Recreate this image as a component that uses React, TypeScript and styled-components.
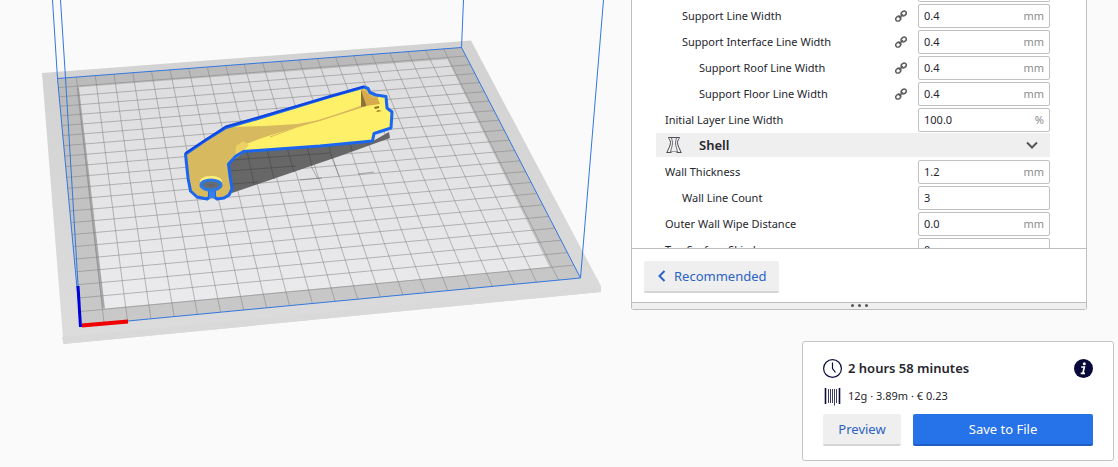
import React from "react";
import styled, { createGlobalStyle } from "styled-components";

const GlobalStyle = createGlobalStyle`
  *, *::before, *::after { box-sizing: border-box; }
  body {
    margin: 0;
    background: #fafafa;
    color: #26262e;
    font-family: "Noto Sans", sans-serif;
    font-size: 11px;
  }
  button, input { font: inherit; color: inherit; }
`;

const Page = styled.div`
  display: flex;
  min-height: 100vh;
  overflow: hidden;
`;

const Viewport = styled.main`
  flex: 1;
  min-width: 0;
`;

const Scene = styled.svg`
  display: block;
  width: 100%;
`;

const Sidebar = styled.aside`
  display: flex;
  flex-direction: column;
  align-items: flex-end;
  justify-content: space-between;
  flex: none;
  padding: 0 4px 6px 0;
`;

const Panel = styled.section`
  width: 456px;
  margin: 0 27px 0 0;
  background: #fff;
  border: 1px solid #bebebe;
  border-top: 0;
  border-radius: 0 0 3px 3px;
`;

const SettingList = styled.div`
  height: 248px;
  overflow: hidden;
  padding: 0 36px 0 24px;
`;

const FieldEdge = styled.div`
  width: 132px;
  height: 2px;
  margin-left: auto;
  border: 1px solid #c0c0c0;
  border-top: 0;
  border-radius: 0 0 2px 2px;
`;

const SettingRow = styled.label<{ $depth: number }>`
  display: flex;
  align-items: center;
  height: 26px;
  padding: 2px 0 0 ${(p) => 9 + p.$depth * 17}px;
  line-height: 24px;
`;

const SettingName = styled.span`
  flex: 1;
  white-space: nowrap;
`;

const LinkIcon = styled.svg`
  width: 12px;
  height: 12px;
  margin-right: 11px;
`;

const Field = styled.span`
  display: flex;
  align-items: center;
  width: 132px;
  height: 24px;
  padding: 0 5px;
  border: 1px solid #c0c0c0;
  border-radius: 2px;
  background: #fff;
`;

const FieldInput = styled.input`
  flex: 1;
  min-width: 0;
  height: 22px;
  padding: 0;
  border: 0;
  outline: 0;
  background: transparent;
`;

const Unit = styled.span`
  color: #8c8c8c;
`;

const CategorySlot = styled.div`
  display: flex;
  align-items: center;
  height: 26px;
`;

const Category = styled.button`
  display: flex;
  align-items: center;
  width: 100%;
  height: 24px;
  padding: 0 12px 0 10px;
  border: 0;
  background: #efefef;
  font-size: 13px;
  font-weight: 600;
  text-align: left;
`;

const CategoryIcon = styled.svg`
  width: 16px;
  height: 16px;
  margin-right: 17px;
`;

const Chevron = styled.svg`
  width: 12px;
  height: 8px;
  margin-left: auto;
`;

const PanelFooter = styled.div`
  padding: 12px 12px 9px;
  border-top: 1px solid #bebebe;
`;

const Button = styled.button<{ $primary?: boolean }>`
  display: flex;
  align-items: center;
  justify-content: center;
  height: 32px;
  padding: 0 12px;
  border: 0;
  border-bottom: 2px solid ${(p) => (p.$primary ? "#1f5cc4" : "#d5d5d5")};
  border-radius: 2px;
  background: ${(p) => (p.$primary ? "#2672e8" : "#efefef")};
  color: ${(p) => (p.$primary ? "#fff" : "#2b63c6")};
  font-size: 13px;
  white-space: nowrap;
`;

const BackIcon = styled.svg`
  width: 8px;
  height: 12px;
  margin: 0 8px 0 2px;
`;

const ResizeHandle = styled.div`
  display: flex;
  justify-content: center;
  gap: 4px;
  height: 7px;
  padding-top: 1px;
  border-top: 1px solid #bebebe;
  background: #efefef;
`;

const Dot = styled.span`
  width: 3px;
  height: 3px;
  border-radius: 50%;
  background: #555;
`;

const PrintCard = styled.section`
  width: 312px;
  padding: 15px 20px 14px;
  background: #fff;
  border: 1px solid #c4c4c4;
  border-radius: 3px;
`;

const InfoRow = styled.div`
  display: flex;
  align-items: center;
  gap: 6px;
  height: 22px;
  margin-bottom: 6px;
`;

const Duration = styled.strong`
  flex: 1;
  font-size: 13px;
  font-weight: 600;
`;

const InfoButton = styled.button`
  display: flex;
  padding: 0;
  border: 0;
  background: none;
`;

const Material = styled.span`
  line-height: 20px;
`;

const Actions = styled.div`
  display: grid;
  grid-template-columns: 78px 1fr;
  gap: 12px;
  padding-top: 1px;
`;

type Point = [number, number];

/* Floor corners of the build volume on screen. */
const BACK_LEFT: Point = [57.5, 78.5];
const BACK_RIGHT: Point = [461.5, 47.5];
const FRONT_RIGHT: Point = [580.5, 278];
const FRONT_LEFT: Point = [80.5, 325.5];
const CELLS = 22;

/* Perspective mapping of the unit square onto the floor. */
function project(u: number, v: number): Point {
  const [x0, y0] = BACK_LEFT;
  const [x1, y1] = BACK_RIGHT;
  const [x2, y2] = FRONT_RIGHT;
  const [x3, y3] = FRONT_LEFT;
  const dx1 = x1 - x2;
  const dx2 = x3 - x2;
  const dx3 = x0 - x1 + x2 - x3;
  const dy1 = y1 - y2;
  const dy2 = y3 - y2;
  const dy3 = y0 - y1 + y2 - y3;
  const det = dx1 * dy2 - dx2 * dy1;
  const g = (dx3 * dy2 - dx2 * dy3) / det;
  const h = (dx1 * dy3 - dx3 * dy1) / det;
  const w = g * u + h * v + 1;
  return [
    ((x1 - x0 + g * x1) * u + (x3 - x0 + h * x3) * v + x0) / w,
    ((y1 - y0 + g * y1) * u + (y3 - y0 + h * y3) * v + y0) / w,
  ];
}

const segment = (a: Point, b: Point) =>
  `M${a[0].toFixed(2)} ${a[1].toFixed(2)}L${b[0].toFixed(2)} ${b[1].toFixed(2)}`;

const gridPath = Array.from({ length: CELLS - 1 }, (_, i) => {
  const t = (i + 1) / CELLS;
  return segment(project(t, 0), project(t, 1)) + segment(project(0, t), project(1, t));
}).join("");

const MODEL =
  "M185.500 154L206 140L226 127.500L256 119L330 96.500L364 87L368 88.500L370 92.500L376 95L386 96.500L387 108L392 112L391 128L374 133.500L372.500 141L320 146L243.500 151.500L236 156L228.500 164L230 176L232 189L229 195L224 198L217 199L214.500 197V188H209.500V197L207 199L197 197L190.500 191L188 178Z";

function BuildPlate() {
  return (
    <Scene viewBox="0 0 631 467" role="img" aria-label="Build plate with model">
      <defs>
        <linearGradient id="bed" x1="0" y1="0" x2="0" y2="1">
          <stop offset="0" stopColor="#dcdcde" />
          <stop offset="1" stopColor="#ebebed" />
        </linearGradient>
        <linearGradient id="rim" x1="0" y1="0" x2="0" y2="1">
          <stop offset="0" stopColor="#d2d2d2" />
          <stop offset="1" stopColor="#dcdcdc" />
        </linearGradient>
        <linearGradient id="margin" x1="0" y1="0" x2="0" y2="1">
          <stop offset="0" stopColor="#b9b9b9" />
          <stop offset="1" stopColor="#c9c9c9" />
        </linearGradient>
        <clipPath id="body">
          <path d={MODEL} />
        </clipPath>
      </defs>
      <path d="M42 73L471 40.500L601 286V292L63.500 344Z" fill="url(#rim)" />
      <path d="M62 337L601 286V292L63.500 344Z" fill="#d9d9d9" />
      <path d="M57.500 78.500L461.500 47.500L580.500 278L80.500 325.500Z" fill="url(#margin)" />
      <path d="M76.500 88L79 87.500L105 308L102 308Z" fill="#a9a9a9" />
      <path d="M79 87.300L447.500 59.300L549.500 267L105 308.500Z" fill="url(#bed)" />
      <path d={gridPath} stroke="#858585" strokeOpacity=".55" fill="none" />
      <path d="M228 164L244 152L373 141L389 132L390 138L340 156L232 193Z" fill="#626262" fillOpacity=".96" />
      <path d="M247 151L254 185M267 150L274 179M287 148L294 172M307 147L312 166M329 145L332 159M350 143L352 151M229 171L296 166M232 184L258 182M232 160L330 153" stroke="#4c4c4c" strokeOpacity=".7" fill="none" />
      <path d="M311 166L318 179M332 158L339 176M300 180L322 178M358 174L374 172" stroke="#666" strokeOpacity=".5" fill="none" />

      <g fill="none" stroke="#3377dd">
        <path d="M52.500 0L57.500 78.500L80.500 325.500M60.500 0L65.500 78L80.500 325.500" />
        <path d="M57.500 78.500L461.500 47.500L580.500 278L80.500 325.500" />
        <path d="M463.500 0L461.500 47.500M603.500 0L580.500 278" />
      </g>
      <path d="M78 286L80.500 327" stroke="#00d" strokeWidth="3" />
      <path d="M82 325.500L128 321.500" stroke="#f00000" strokeWidth="4" />

      <g clipPath="url(#body)">
        <path d={MODEL} fill="#d7b95f" />
        <path d="M227 127L365 86L363 105L320 120L297 124L265 126Z" fill="#fff069" />
        <path d="M236 159L241 146L262 138L297 127L320 121L363 107L378 100V94L395 96V130L373 144L243 154Z" fill="#fff069" />
        <path d="M236 146L243 141L249 145L241 154L235 157Z" fill="#ebd064" />
        <path d="M361 90L363 89L370 97L378 99L380 104L373 105L366 106L361 107Z" fill="#d7aa4b" />
        <path d="M361 90L366.500 106L361 107Z" fill="#89733a" />
        <path d="M374 107L379 106V108L375 109ZM378 110L382 111L376 112Z" fill="#8a6e2b" />
        <path d="M270 137L297 127L362 107" stroke="#d7b95f" fill="none" />
      </g>
      <ellipse cx="211" cy="181" rx="11" ry="5" fill="#ffee79" />
      <path d={MODEL} fill="none" stroke="#1b66ef" strokeWidth="3" strokeLinejoin="round" />
      <path d="M185.500 153L226 126.500L256 118L364 86.500" stroke="#1044df" strokeWidth="2" fill="none" />
      <path d="M212 188V198" stroke="#3780e5" strokeWidth="6" />
      <ellipse cx="211" cy="185" rx="10" ry="5" fill="#646d7b" stroke="#2d79e5" strokeWidth="3" />
      <path d="M207 184H215L211 188Z" fill="#666" />
    </Scene>
  );
}

interface Setting {
  name: string;
  value: string;
  unit?: string;
  depth?: number;
  linked?: boolean;
}

const lineWidths: Setting[] = [
  { name: "Support Line Width", value: "0.4", unit: "mm", depth: 1, linked: true },
  { name: "Support Interface Line Width", value: "0.4", unit: "mm", depth: 1, linked: true },
  { name: "Support Roof Line Width", value: "0.4", unit: "mm", depth: 2, linked: true },
  { name: "Support Floor Line Width", value: "0.4", unit: "mm", depth: 2, linked: true },
  { name: "Initial Layer Line Width", value: "100.0", unit: "%" },
];

const shellSettings: Setting[] = [
  { name: "Wall Thickness", value: "1.2", unit: "mm" },
  { name: "Wall Line Count", value: "3", depth: 1 },
  { name: "Outer Wall Wipe Distance", value: "0.0", unit: "mm" },
  { name: "Top Surface Skin Layers", value: "0" },
];

function SettingField({ name, value, unit, depth = 0, linked }: Setting) {
  return (
    <SettingRow $depth={depth}>
      <SettingName>{name}</SettingName>
      {linked && (
        <LinkIcon viewBox="0 0 12 12" fill="none" stroke="#5c5c5c" strokeWidth="1.500" aria-hidden>
          <ellipse cx="3.300" cy="8.700" rx="2.700" ry="2.200" transform="rotate(-40 3.300 8.700)" />
          <ellipse cx="8.700" cy="3.500" rx="2.700" ry="2.200" transform="rotate(-40 8.700 3.500)" />
          <path d="M4 8L8 4.300" />
        </LinkIcon>
      )}
      <Field>
        <FieldInput defaultValue={value} />
        {unit && <Unit>{unit}</Unit>}
      </Field>
    </SettingRow>
  );
}

export default function App() {
  return (
    <>
      <GlobalStyle />
      <Page>
        <Viewport>
          <BuildPlate />
        </Viewport>
        <Sidebar>
          <Panel>
            <SettingList>
              <FieldEdge />
              {lineWidths.map((s) => (
                <SettingField key={s.name} {...s} />
              ))}
              <CategorySlot>
                <Category>
                  <CategoryIcon viewBox="0 0 16 16" fill="none" stroke="#3c3c44" strokeWidth=".900" aria-hidden>
                    <path d="M2.500 .500H13.500M2.500 .500C3 2.500 4.500 3 4.500 5.500C4.500 9 2 12 1 15.500M13.500 .500C13 2.500 11.500 3 11.500 5.500C11.500 9 14 12 15 15.500M.500 15.500H5.500M10.500 15.500H15.500" />
                    <path d="M5.500 1C6 3 6.500 4 6.500 6C6.500 9 5 12 4.500 15M10.500 1C10 3 9.500 4 9.500 6C9.500 9 11 12 11.500 15" strokeOpacity=".8" />
                    <path d="M5 14.500H11" strokeOpacity=".5" />
                  </CategoryIcon>
                  Shell
                  <Chevron viewBox="0 0 12 8" fill="none" stroke="#555" strokeWidth="2" aria-hidden>
                    <path d="M1 1.500L6 6.500L11 1.500" />
                  </Chevron>
                </Category>
              </CategorySlot>
              {shellSettings.map((s) => (
                <SettingField key={s.name} {...s} />
              ))}
            </SettingList>
            <PanelFooter>
              <Button>
                <BackIcon viewBox="0 0 8 12" fill="none" stroke="#2b63c6" strokeWidth="2" aria-hidden>
                  <path d="M6.500 1L1.500 6L6.500 11" />
                </BackIcon>
                Recommended
              </Button>
            </PanelFooter>
            <ResizeHandle>
              <Dot />
              <Dot />
              <Dot />
            </ResizeHandle>
          </Panel>
          <PrintCard>
            <InfoRow>
              <svg width="19" height="19" viewBox="0 0 19 19" fill="none" stroke="#0b0b3e" aria-hidden>
                <circle cx="9.500" cy="9.500" r="8.900" strokeWidth="1.200" />
                <path d="M9.500 3.500V9.500L12.500 13.500" strokeWidth="1.200" />
              </svg>
              <Duration>2 hours 58 minutes</Duration>
              <InfoButton aria-label="Print details">
                <svg width="19" height="19" viewBox="0 0 19 19" aria-hidden>
                  <circle cx="9.500" cy="9.500" r="9.500" fill="#08083a" />
                  <circle cx="10.300" cy="4.800" r="1.500" fill="#fff" />
                  <path d="M7.200 8H10.300L8.900 14.300H11M6.700 14.300H8.900" stroke="#fff" strokeWidth="1.700" fill="none" />
                </svg>
              </InfoButton>
            </InfoRow>
            <InfoRow>
              <svg width="19" height="19" viewBox="0 0 19 19" fill="none" stroke="#0b0b3e" aria-hidden>
                <path d="M2.500 1V17M16.500 1V17" strokeWidth="1.600" />
                <path d="M5.500 2V16M7.500 2V16M9.500 2V16M11.500 2V18.500M13.500 2V16" strokeOpacity=".8" />
              </svg>
              <Material>12g · 3.89m · € 0.23</Material>
            </InfoRow>
            <Actions>
              <Button>Preview</Button>
              <Button $primary>Save to File</Button>
            </Actions>
          </PrintCard>
        </Sidebar>
      </Page>
    </>
  );
}
